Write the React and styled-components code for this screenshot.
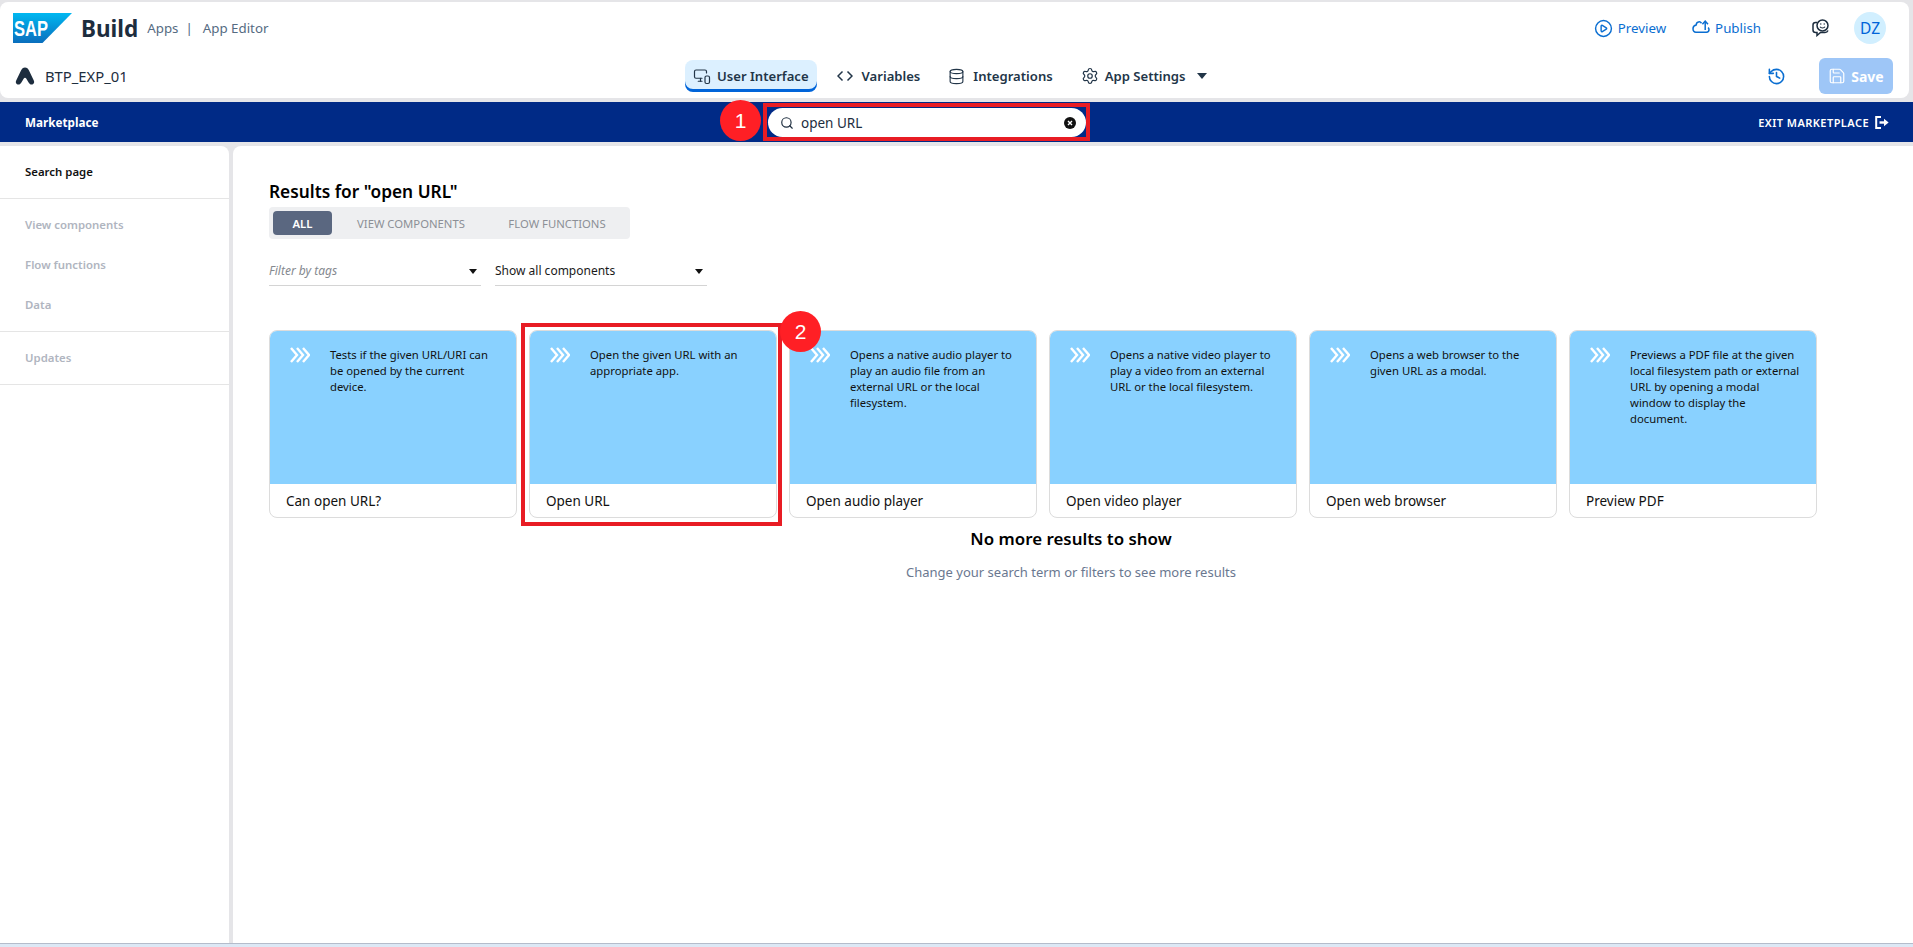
import React from 'react'
import styled, { createGlobalStyle } from 'styled-components'
import { CirclePlay, Database, History, MonitorSmartphone, Save, Search, Settings } from 'lucide-react'

const FONT = '"Noto Sans", "Open Sans", Arial, sans-serif'

const GlobalStyle = createGlobalStyle`
  html, body {
    margin: 0;
    height: 100%;
    overflow: hidden;
    font-family: ${FONT};
    color: #1d2d3e;
    background: #e5e5e8;
  }
  * { box-sizing: border-box; }
`

const Page = styled.div`
  display: flex;
  flex-direction: column;
  height: 100vh;
`

const Header = styled.header`
  margin: 2px 4px 4px 0;
  height: 96px;
  flex: none;
  background: #fff;
  border-radius: 8px;
`

const TopRow = styled.div`
  display: flex;
  align-items: center;
  height: 48px;
  padding: 4px 23px 0 13px;
`

const Logo = styled.svg`
  width: 59px;
  height: 30px;
  flex: none;
`

const BuildName = styled.span`
  margin-left: 9px;
  font-size: 22.5px;
  font-weight: 700;
  color: #1d2d3e;
`

const Crumb = styled.span`
  font-size: 13.3px;
  color: #556b82;
  margin-left: ${({ $gap }) => $gap}px;
`

const TopActions = styled.div`
  margin-left: auto;
  display: flex;
  align-items: center;
`

const LinkAction = styled.span`
  display: flex;
  align-items: center;
  gap: ${({ $iconGap }) => $iconGap}px;
  margin-right: ${({ $gap }) => $gap}px;
  font-size: 13.3px;
  color: #0a6ed1;
`

const Avatar = styled.span`
  display: flex;
  align-items: center;
  justify-content: center;
  width: 32px;
  height: 32px;
  margin-left: 24px;
  border-radius: 50%;
  background: #d1efff;
  color: #0064d9;
  font-size: 15.5px;
`

const NavRow = styled.div`
  display: grid;
  grid-template-columns: 685px auto 1fr;
  align-items: center;
  height: 48px;
  padding-top: 4px;
`

const Project = styled.div`
  display: flex;
  align-items: center;
  gap: 10px;
  padding-left: 15px;
  font-size: 14.8px;
  color: #1d2d3e;
`

const Nav = styled.nav`
  display: flex;
  align-items: center;
`

const NavTab = styled.span`
  display: flex;
  align-items: center;
  gap: ${({ $gap }) => $gap}px;
  height: 32px;
  padding: 0 8px;
  margin-right: 12px;
  border-radius: 8px;
  font-size: 13.1px;
  font-weight: 600;
  color: #223548;
  background: ${({ $active }) => ($active ? '#dcf0ff' : 'transparent')};
  box-shadow: ${({ $active }) => ($active ? 'inset 0 -3px 0 #0064d9' : 'none')};
`

const Caret = styled.span`
  width: 0;
  height: 0;
  margin-top: ${({ $offset }) => $offset || 0}px;
  margin-left: ${({ $lead }) => $lead || 0}px;
  border-left: ${({ $size }) => $size}px solid transparent;
  border-right: ${({ $size }) => $size}px solid transparent;
  border-top: ${({ $size }) => $size + 1}px solid ${({ $color }) => $color || '#223548'};
`

const RightTools = styled.div`
  display: flex;
  align-items: center;
  justify-content: flex-end;
  gap: 33px;
  padding-right: 16px;
  color: #0a6ed1;
`

const SaveButton = styled.span`
  display: flex;
  align-items: center;
  justify-content: center;
  gap: 5px;
  width: 74px;
  height: 36px;
  border-radius: 6px;
  background: #9ec6f7;
  color: #fff;
  font-size: 14px;
  font-weight: 700;
`

const MarketBar = styled.div`
  position: relative;
  display: flex;
  align-items: center;
  justify-content: space-between;
  flex: none;
  height: 40px;
  padding: 0 24px 0 25px;
  margin-bottom: 4px;
  background: #002a86;
  color: #fff;
`

const MarketTitle = styled.span`
  padding-bottom: 1px;
  font-size: 11.7px;
  font-weight: 700;
`

const ExitLink = styled.span`
  display: flex;
  align-items: center;
  gap: 6px;
  font-size: 11px;
  font-weight: 600;
  letter-spacing: 0.45px;
`

const SearchField = styled.div`
  position: absolute;
  left: 768px;
  top: 6px;
  display: flex;
  align-items: center;
  gap: 7px;
  width: 318px;
  height: 29px;
  padding: 0 10px 0 12px;
  border-radius: 15px;
  background: #fff;
  color: #1d2d3e;
  font-size: 13.5px;

  svg:last-child {
    margin-left: auto;
  }
`

const RedFrame = styled.div`
  position: absolute;
  left: ${({ $left }) => $left}px;
  top: ${({ $top }) => $top}px;
  width: ${({ $width }) => $width}px;
  height: ${({ $height }) => $height}px;
  border: 4px solid #e81c24;
  pointer-events: none;
`

const StepBadge = styled.span`
  position: absolute;
  left: ${({ $left }) => $left}px;
  top: ${({ $top }) => $top}px;
  display: flex;
  align-items: center;
  justify-content: center;
  width: 41px;
  height: 41px;
  border-radius: 50%;
  background: #ff1f25;
  color: #fff;
  font-family: "Liberation Sans", Arial, sans-serif;
  font-size: 21px;
  z-index: 2;
`

const Content = styled.div`
  display: flex;
  flex: 1;
  gap: 4px;
  min-height: 0;
`

const Sidebar = styled.aside`
  flex: none;
  width: 229px;
  background: #fff;
  border-top-right-radius: 8px;
`

const SideGroup = styled.div`
  padding: 6px 0;
  border-bottom: 1px solid #e5e5e5;
`

const SideItem = styled.div`
  display: flex;
  align-items: center;
  height: 40px;
  padding: 0 0 2px 25px;
  font-size: 11.4px;
  font-weight: 600;
  color: ${({ $active }) => ($active ? '#111' : '#b0b5c0')};
`

const Main = styled.main`
  position: relative;
  flex: 1;
  padding-top: 34px;
  background: #fff;
  border-top-left-radius: 8px;
`

const Controls = styled.div`
  padding-left: 36px;
`

const ResultsTitle = styled.h1`
  margin: 0 0 3px;
  font-size: 17.3px;
  line-height: 24px;
  font-weight: 600;
  color: #000;
`

const FilterTabs = styled.div`
  display: flex;
  align-items: center;
  width: 361px;
  height: 32px;
  padding-left: 4px;
  border-radius: 4px;
  background: #eeeff1;
`

const FilterTab = styled.span`
  display: flex;
  align-items: center;
  justify-content: center;
  width: ${({ $width }) => $width}px;
  height: 24px;
  border-radius: 4px;
  font-size: 11.3px;
  color: ${({ $active }) => ($active ? '#fff' : '#8c8f96')};
  background: ${({ $active }) => ($active ? '#5a6780' : 'transparent')};
  font-weight: ${({ $active }) => ($active ? 600 : 400)};
`

const Selects = styled.div`
  display: flex;
  gap: 14px;
  margin-top: 15px;
`

const Select = styled.div`
  display: flex;
  align-items: center;
  justify-content: space-between;
  width: 212px;
  height: 32px;
  padding: 2px 4px 0 0;
  border-bottom: 1px solid #d4d4d4;
  font-size: 12px;
  color: ${({ $placeholder }) => ($placeholder ? '#85898f' : '#1a1a1a')};
  font-style: ${({ $placeholder }) => ($placeholder ? 'italic' : 'normal')};
`

const CardRow = styled.div`
  display: flex;
  gap: 12px;
  margin: 44px 0 0 36px;
`

const Card = styled.article`
  display: flex;
  flex-direction: column;
  width: 248px;
  height: 188px;
  border: 1px solid #dcdcdc;
  border-radius: 8px;
  overflow: hidden;
`

const CardBody = styled.div`
  display: flex;
  flex: 1;
  gap: 20px;
  padding: 16px 16px 0 20px;
  background: #89d1ff;
`

const CardText = styled.p`
  margin: 0;
  font-size: 11.3px;
  line-height: 16px;
  color: #111;
`

const CardName = styled.div`
  display: flex;
  align-items: center;
  flex: none;
  height: 33px;
  padding-left: 16px;
  font-size: 13.5px;
  color: #111;
`

const Chevrons = styled.svg`
  flex: none;
  width: 20px;
  height: 16px;
`

const EndMessage = styled.div`
  margin-top: 9px;
  padding-right: 4px;
  text-align: center;
`

const EndTitle = styled.h2`
  margin: 0 0 11px;
  font-size: 16.9px;
  line-height: 24px;
  font-weight: 600;
  color: #000;
`

const EndHint = styled.p`
  margin: 0;
  font-size: 13px;
  line-height: 20px;
  color: #6a7890;
`

const Footer = styled.div`
  flex: none;
  height: 4px;
  border-top: 1px solid #b4bccb;
  background: #dce8f5;
`

const cards = [
  { name: 'Can open URL?', text: 'Tests if the given URL/URI can be opened by the current device.' },
  { name: 'Open URL', text: 'Open the given URL with an appropriate app.' },
  { name: 'Open audio player', text: 'Opens a native audio player to play an audio file from an external URL or the local filesystem.' },
  { name: 'Open video player', text: 'Opens a native video player to play a video from an external URL or the local filesystem.' },
  { name: 'Open web browser', text: 'Opens a web browser to the given URL as a modal.' },
  { name: 'Preview PDF', text: 'Previews a PDF file at the given local filesystem path or external URL by opening a modal window to display the document.' },
]

const SapLogo = () => (
  <Logo viewBox="0 0 59 30">
    <defs>
      <linearGradient id="sapBlue" x1="0" y1="0" x2="0" y2="1">
        <stop offset="0" stopColor="#00b8f1" />
        <stop offset="1" stopColor="#0a6ebd" />
      </linearGradient>
    </defs>
    <polygon points="0,0 59,0 29.5,30 0,30" fill="url(#sapBlue)" />
    <text x="1" y="23" fontFamily="Liberation Sans, Arial, sans-serif" fontSize="22" fontWeight="700" fill="#fff" textLength="34" lengthAdjust="spacingAndGlyphs">SAP</text>
  </Logo>
)

const ProjectIcon = () => (
  <svg width="20" height="18" viewBox="0 0 20 18">
    <path fill="#1d2d3e" d="M10 0.5C12 0.5 13 1.6 14 3.6L18.8 13.5C19.8 15.6 18.6 17.6 16.6 17.6C15.2 17.6 14.4 16.8 13.6 15.5L11.2 11.4C10.6 10.5 9.4 10.5 8.8 11.4L6.4 15.5C5.6 16.8 4.8 17.6 3.4 17.6C1.4 17.6 0.2 15.6 1.2 13.5L6 3.6C7 1.6 8 0.5 10 0.5Z" />
  </svg>
)

const FeedbackIcon = () => (
  <svg width="18" height="18" viewBox="0 0 18 18" fill="none" stroke="#1d2d3e" strokeWidth="1.5">
    <circle cx="10.5" cy="6.5" r="5.5" />
    <path d="M5 3.5H3.5C2 3.5 1 4.5 1 6V11C1 12.5 2 13.5 3.5 13.5H5V16.5L8.5 13.5H13C14.5 13.5 15.5 12.8 16 11.5" />
    <path d="M8 7.8C9 9.4 12 9.4 13 7.8" strokeWidth="1.2" />
    <circle cx="8.8" cy="5" r="0.7" fill="#1d2d3e" stroke="none" />
    <circle cx="12.2" cy="5" r="0.7" fill="#1d2d3e" stroke="none" />
  </svg>
)

const PublishIcon = () => (
  <svg width="18" height="16" viewBox="0 0 18 16" fill="none" stroke="#0a6ed1" strokeWidth="1.5">
    <path d="M9.5 3.2C8.8 2.2 7.6 1.6 6.4 2C5 2.4 4.2 3.6 4.2 5C2.4 5.4 1 6.9 1 8.8C1 10.4 1.9 12.2 4 12.2H14.5C16 12.2 17 11 17 9.6C17 8.8 16.6 8 16 7.6" />
    <path d="M13.2 10V2" />
    <path d="M10.4 4.2L13.2 1.2L16 4.2" />
  </svg>
)

const CodeIcon = () => (
  <svg width="16" height="16" viewBox="0 0 16 16" fill="none" stroke="#223548" strokeWidth="1.5">
    <path d="M5.5 3.5L1 8L5.5 12.5" />
    <path d="M10.5 3.5L15 8L10.5 12.5" />
  </svg>
)

const ExitIcon = () => (
  <svg width="14" height="13" viewBox="0 0 14 13" fill="none" stroke="#fff">
    <path d="M6 1H1.2V12H6" strokeWidth="2" />
    <path d="M4.5 6.5H10" strokeWidth="2.4" />
    <path d="M9 2.8L13.6 6.5L9 10.2Z" fill="#fff" strokeWidth="0" />
  </svg>
)

const ClearIcon = () => (
  <svg width="12" height="12" viewBox="0 0 12 12">
    <circle cx="6" cy="6" r="6" fill="#111" />
    <path d="M4 4L8 8M8 4L4 8" stroke="#fff" strokeWidth="1.4" />
  </svg>
)

const ChevronIcon = () => (
  <Chevrons viewBox="0 0 20 16" fill="none" stroke="#fff" strokeWidth="2.4">
    <path d="M1 1L7 8L1 15" />
    <path d="M7 1L13 8L7 15" />
    <path d="M13 1L19 8L13 15" />
  </Chevrons>
)

const App = () => {
  return (
    <Page>
      <GlobalStyle />
      <Header>
        <TopRow>
          <SapLogo />
          <BuildName>Build</BuildName>
          <Crumb $gap={9}>Apps</Crumb>
          <Crumb $gap={7}>|</Crumb>
          <Crumb $gap={10}>App Editor</Crumb>
          <TopActions>
            <LinkAction $gap={26} $iconGap={5}><CirclePlay size={19} strokeWidth={1.8} />Preview</LinkAction>
            <LinkAction $gap={51} $iconGap={5}><PublishIcon />Publish</LinkAction>
            <FeedbackIcon />
            <Avatar>DZ</Avatar>
          </TopActions>
        </TopRow>
        <NavRow>
          <Project><ProjectIcon />BTP_EXP_01</Project>
          <Nav>
            <NavTab $active $gap={6}><MonitorSmartphone size={18} strokeWidth={1.6} />User Interface</NavTab>
            <NavTab $gap={9}><CodeIcon />Variables</NavTab>
            <NavTab $gap={8}><Database size={17} strokeWidth={1.6} />Integrations</NavTab>
            <NavTab $gap={6}><Settings size={18} strokeWidth={1.6} />App Settings<Caret $size={5} $lead={5} /></NavTab>
          </Nav>
          <RightTools>
            <History size={19} strokeWidth={2} />
            <SaveButton><Save size={18} strokeWidth={1.6} />Save</SaveButton>
          </RightTools>
        </NavRow>
      </Header>

      <MarketBar>
        <MarketTitle>Marketplace</MarketTitle>
        <SearchField>
          <Search size={14} strokeWidth={2} />
          open URL
          <ClearIcon />
        </SearchField>
        <RedFrame $left={763} $top={1} $width={327} $height={38} />
        <StepBadge $left={720} $top={-2}>1</StepBadge>
        <ExitLink>EXIT MARKETPLACE <ExitIcon /></ExitLink>
      </MarketBar>

      <Content>
        <Sidebar>
          <SideGroup><SideItem $active>Search page</SideItem></SideGroup>
          <SideGroup>
            <SideItem>View components</SideItem>
            <SideItem>Flow functions</SideItem>
            <SideItem>Data</SideItem>
          </SideGroup>
          <SideGroup><SideItem>Updates</SideItem></SideGroup>
        </Sidebar>
        <Main>
          <Controls>
            <ResultsTitle>Results for "open URL"</ResultsTitle>
            <FilterTabs>
              <FilterTab $active $width={59}>ALL</FilterTab>
              <FilterTab $width={158}>VIEW COMPONENTS</FilterTab>
              <FilterTab $width={134}>FLOW FUNCTIONS</FilterTab>
            </FilterTabs>
            <Selects>
              <Select $placeholder>Filter by tags<Caret $size={4} $color="#111" $offset={2} /></Select>
              <Select>Show all components<Caret $size={4} $color="#111" $offset={2} /></Select>
            </Selects>
          </Controls>
          <CardRow>
            {cards.map(card => (
              <Card key={card.name}>
                <CardBody>
                  <ChevronIcon />
                  <CardText>{card.text}</CardText>
                </CardBody>
                <CardName>{card.name}</CardName>
              </Card>
            ))}
          </CardRow>
          <RedFrame $left={288} $top={177} $width={261} $height={203} />
          <StepBadge $left={547} $top={165}>2</StepBadge>
          <EndMessage>
            <EndTitle>No more results to show</EndTitle>
            <EndHint>Change your search term or filters to see more results</EndHint>
          </EndMessage>
        </Main>
      </Content>
      <Footer />
    </Page>
  )
}

export default App
